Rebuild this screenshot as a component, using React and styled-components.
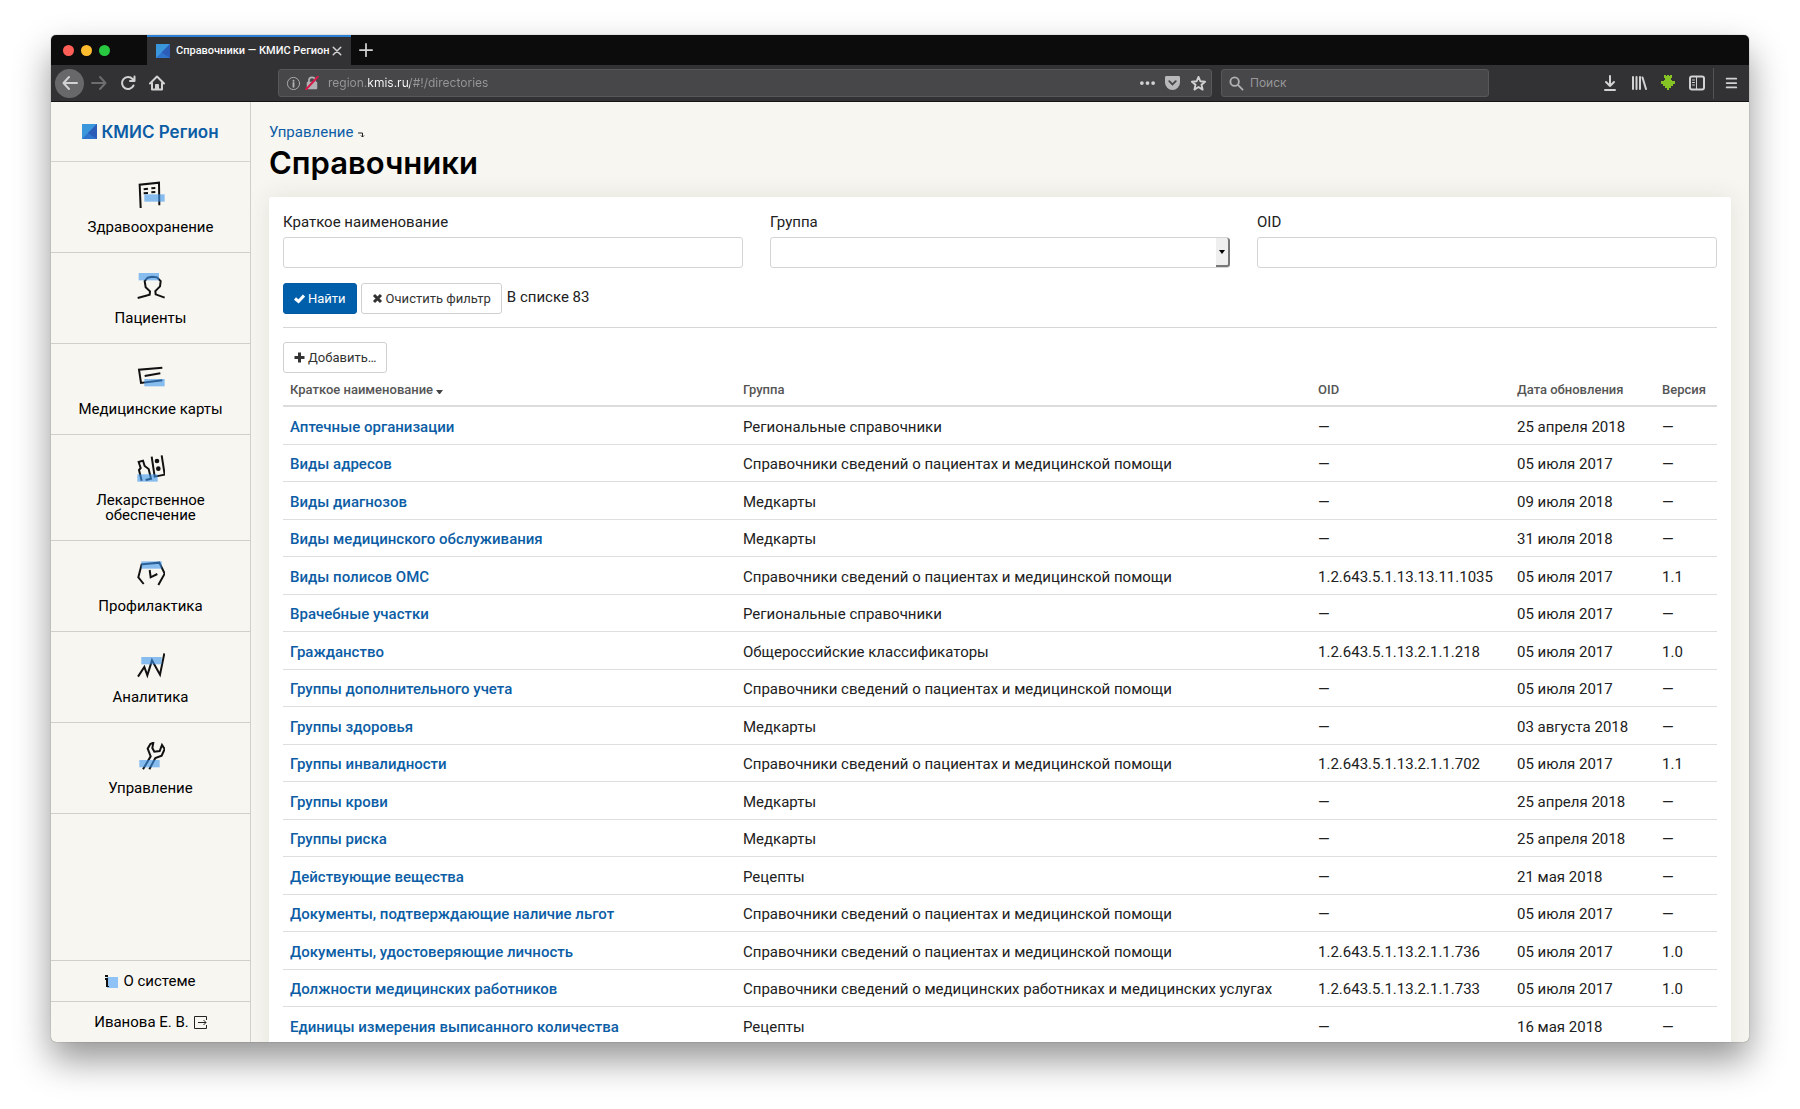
import React from "react";
import styled, { createGlobalStyle, css } from "styled-components";

const GlobalStyle = createGlobalStyle`
  *, *::before, *::after { box-sizing: border-box; }
  body {
    margin: 0;
    background: #fff;
    color: #212121;
    font: 15px/18px Roboto, "Noto Sans", sans-serif;
  }
  button, input, select { font: inherit; margin: 0; }
  a { color: #0c5da5; text-decoration: none; }
  svg { display: block; flex: none; }
`;

const Desktop = styled.div`
  height: 100vh;
  padding: 35px 51px 67px;
  overflow: hidden;
`;

const Window = styled.div`
  height: 100%;
  display: flex;
  flex-direction: column;
  border-radius: 5px;
  overflow: hidden;
  background: #f7f6f1;
  box-shadow: 0 0 1px rgba(0, 0, 0, 0.6), 0 18px 36px rgba(0, 0, 0, 0.42);
`;

/* Browser chrome */

const TabBar = styled.div`
  display: flex;
  align-items: stretch;
  height: 30px;
  flex: none;
  background: #0c0c0d;
`;

const Lights = styled.div`
  display: flex;
  align-items: center;
  gap: 7px;
  width: 96px;
  padding-left: 12px;
`;

const Light = styled.button`
  width: 11px;
  height: 11px;
  padding: 0;
  border: 0;
  border-radius: 50%;
  background: ${(p) => p.$color};
`;

const Tab = styled.div`
  display: flex;
  align-items: center;
  width: 204px;
  padding: 0 9px;
  border-top: 2px solid #2b80d3;
  background: #323234;
  color: #f9f9fa;
  font: 500 11px/14px Roboto, sans-serif;
  white-space: nowrap;
`;

const TabTitle = styled.span`
  flex: 1;
  margin-left: 6px;
`;

const ChromeButton = styled.button`
  display: flex;
  align-items: center;
  justify-content: center;
  flex: none;
  width: ${(p) => p.$width || 29}px;
  height: 29px;
  padding: 0;
  border: 0;
  border-radius: 50%;
  background: ${(p) => (p.$filled ? "#68686a" : "none")};
  color: ${(p) => (p.$dim ? "#6d6d6f" : "#d2d2d3")};
`;

const TabClose = styled(ChromeButton)`
  height: 14px;
`;

const Toolbar = styled.div`
  display: flex;
  align-items: center;
  height: 37px;
  flex: none;
  padding: 0 4px;
  border-bottom: 1px solid #141415;
  background: #323234;
`;

const Spacer = styled.div`
  width: ${(p) => p.$width}px;
  flex: none;
`;

const Field = styled.div`
  display: flex;
  align-items: center;
  height: 28px;
  padding: 0 ${(p) => (p.$wide ? 0 : 6)}px 0 7px;
  border: 1px solid #58585a;
  border-radius: 3px;
  background: #474749;
  color: #b1b1b3;
  ${(p) =>
    p.$wide
      ? css`
          flex: 1;
        `
      : css`
          width: 268px;
          margin-left: 9px;
          flex: none;
        `}
`;

const FieldInput = styled.input`
  flex: 1;
  min-width: 0;
  border: 0;
  padding: 0;
  outline: 0;
  margin-left: ${(p) => p.$gap}px;
  background: none;
  color: #98989a;
  font: 12px/18px Inter, sans-serif;
  &::placeholder { color: #98989a; opacity: 1; }
`;

const AddressInput = styled(FieldInput)`
  background: linear-gradient(90deg, #98989a 40px, #f9f9fa 40px 82px, #98989a 82px);
  background-clip: text;
  -webkit-background-clip: text;
  -webkit-text-fill-color: transparent;
`;

const Divider = styled.div`
  width: 1px;
  height: 31px;
  margin: 0 2px;
  background: #535355;
`;

/* Page */

const Page = styled.div`
  flex: 1;
  min-height: 0;
  display: flex;
`;

const Sidebar = styled.nav`
  display: flex;
  flex-direction: column;
  flex: none;
  width: 200px;
  border-right: 1px solid #cfcfcc;
`;

const Brand = styled.a`
  display: flex;
  align-items: center;
  justify-content: center;
  gap: 4px;
  height: 60px;
  border-bottom: 1px solid #d3d3d0;
  font: 600 17px/20px Inter, sans-serif;
`;

const NavItem = styled.a`
  display: flex;
  flex-direction: column;
  align-items: center;
  gap: 11px;
  padding: 19px 20px 17px;
  border-bottom: 1px solid #cfcfcc;
  color: #000;
  line-height: 15px;
  text-align: center;
`;

const NavFooter = styled.div`
  margin-top: auto;
`;

const FooterLink = styled.a`
  display: flex;
  align-items: center;
  justify-content: center;
  gap: 5px;
  height: 41px;
  border-top: 1px solid #cfcfcc;
  color: #000;
`;

const Main = styled.main`
  flex: 1;
  min-width: 0;
  padding: 20px 18px 0 18px;
  overflow: hidden;
`;

const Crumbs = styled.div`
  display: flex;
  align-items: center;
  gap: 5px;
  height: 20px;
`;

const CrumbArrow = styled.svg`
  margin-top: 5px;
`;

const Title = styled.h1`
  margin: 4px 0 17px;
  color: #000;
  font: 600 31px/34px Inter, sans-serif;
`;

const Card = styled.section`
  padding: 14px;
  border-radius: 3px;
  background: #fff;
  box-shadow: 0 0 24px rgba(60, 50, 0, 0.1);
`;

const Filters = styled.div`
  display: grid;
  grid-template-columns: repeat(3, 1fr);
  gap: 27px;
`;

const FilterLabel = styled.label`
  display: block;
  line-height: 22px;
  margin-bottom: 4px;
`;

const control = css`
  display: block;
  width: 100%;
  height: 31px;
  padding: 0 8px;
  border: 1px solid #d4d4d4;
  border-radius: 3px;
  background: #fff;
`;

const TextBox = styled.input`
  ${control}
`;

const SelectWrap = styled.div`
  position: relative;
`;

const Select = styled.select`
  ${control}
  appearance: none;
`;

const SelectArrow = styled.span`
  position: absolute;
  top: 1px;
  right: 0;
  bottom: 1px;
  display: flex;
  align-items: center;
  justify-content: center;
  width: 14px;
  border: solid #777;
  border-width: 0 2px 2px 0;
  border-radius: 0 3px 3px 0;
  background: #efefef;
  pointer-events: none;
`;

const Actions = styled.div`
  display: flex;
  gap: 4px;
  padding: 15px 0 13px;
  border-bottom: 1px solid #d6d6d6;
  margin-bottom: 14px;
`;

const Button = styled.button`
  display: inline-flex;
  align-items: center;
  gap: 3px;
  height: 31px;
  padding: 0 10px;
  border: 1px solid ${(p) => (p.$primary ? "#005ba3" : "#d0d0d0")};
  border-radius: 3px;
  background: ${(p) => (p.$primary ? "#005fab" : "#fff")};
  color: ${(p) => (p.$primary ? "#fff" : "#333")};
  font-size: 13px;
`;

const Count = styled.span`
  margin-left: 1px;
  line-height: 28px;
`;

const Table = styled.table`
  width: 100%;
  table-layout: fixed;
  border-collapse: separate;
  border-spacing: 0;
  white-space: nowrap;
`;

const Column = styled.col`
  width: ${(p) => (p.$width ? `${p.$width}px` : "auto")};
`;

const HeadCell = styled.th`
  height: 34px;
  padding: 1px 7px 0;
  border-bottom: 2px solid #dcdcdc;
  color: #555;
  font-size: 13px;
  font-weight: 500;
  text-align: left;
`;

const SortArrow = styled.svg`
  display: inline-block;
  margin-left: 3px;
`;

const Cell = styled.td`
  padding: 2px 7px 0;
  border-bottom: 1px solid #dedede;
`;

const Row = styled.tr`
  height: 38px;
  &:nth-child(even) { height: 37px; }
`;

const NameLink = styled.a`
  font-weight: 500;
`;

function Logo({ size }) {
  return (
    <svg width={size} height={size} viewBox="0 0 15 15" aria-hidden="true">
      <path d="M0 0h15v15H0z" fill="#3a97dc" />
      <path d="M15 0v15H0z" fill="#2f74cc" />
      <path d="M15 0v15L6 9z" fill="#2b5cb8" />
    </svg>
  );
}

function Stroke({ size = 16, width = 2, children }) {
  return (
    <svg width={size} height={size} viewBox="0 0 16 16" fill="none" stroke="currentColor"
      strokeWidth={width} strokeLinecap="round" strokeLinejoin="round" aria-hidden="true">
      {children}
    </svg>
  );
}

function BoldIcon({ d }) {
  return (
    <svg width="11" height="11" viewBox="0 0 11 11" fill="none" stroke="currentColor" strokeWidth="3" aria-hidden="true">
      <path d={d} />
    </svg>
  );
}

const navItems = [
  { label: "Здравоохранение", rect: [22, 40],
    art: <path d="M11 81L8 11L66 5L67 73M20 25L33 23M43 22L55 21M20 37L33 36M43 34L55 33" /> },
  { label: "Пациенты", rect: [5, 3],
    art: <path d="M2 78L38 68L39 58L26 46L23 27L32 17L45 14L60 16L71 27L69 43L55 57L56 67L83 77" /> },
  { label: "Медицинские карты", rect: [22, 48],
    art: <path d="M76 14L6 20L12 60L76 52M23 39L70 31" /> },
  { label: "Лекарственное обеспечение", rect: [1, 61],
    art: (
      <>
        <path d="M14 80L6 48L11 42L5 24L18 20L23 36L35 45L42 74L26 78M44 8L53 68L83 62L74 4" />
        <circle cx="60" cy="21" r="4" fill="#111" />
        <circle cx="64" cy="44" r="4" fill="#111" />
      </>
    ) },
  { label: "Профилактика", rect: [13, 4],
    art: <path d="M20 72L4 52L14 13L67 8L83 41L64 75M38 30L41 52L61 42" /> },
  { label: "Аналитика", rect: [13, 18],
    art: <path d="M3 77L22 48L31 73L45 28L69 71L82 7" /> },
  { label: "Управление", rect: [7, 54],
    art: <path d="M18 82L41 43L32 20L40 6L49 2L46 18L52 29L68 27L75 9L83 21L74 41L55 48L37 82" /> },
];

function NavIcon({ rect, art }) {
  return (
    <svg width="28" height="28" viewBox="0 0 84 84" aria-hidden="true">
      <g fill="none" stroke="#111" strokeWidth="6">{art}</g>
      <rect x={rect[0]} y={rect[1]} width="61" height="22" fill="#3c96ee" fillOpacity="0.6" />
    </svg>
  );
}

const REG = "Региональные справочники";
const PAT = "Справочники сведений о пациентах и медицинской помощи";
const MED = "Медкарты";

const rows = [
  ["Аптечные организации", REG, "—", "25 апреля 2018", "—"],
  ["Виды адресов", PAT, "—", "05 июля 2017", "—"],
  ["Виды диагнозов", MED, "—", "09 июля 2018", "—"],
  ["Виды медицинского обслуживания", MED, "—", "31 июля 2018", "—"],
  ["Виды полисов ОМС", PAT, "1.2.643.5.1.13.13.11.1035", "05 июля 2017", "1.1"],
  ["Врачебные участки", REG, "—", "05 июля 2017", "—"],
  ["Гражданство", "Общероссийские классификаторы", "1.2.643.5.1.13.2.1.1.218", "05 июля 2017", "1.0"],
  ["Группы дополнительного учета", PAT, "—", "05 июля 2017", "—"],
  ["Группы здоровья", MED, "—", "03 августа 2018", "—"],
  ["Группы инвалидности", PAT, "1.2.643.5.1.13.2.1.1.702", "05 июля 2017", "1.1"],
  ["Группы крови", MED, "—", "25 апреля 2018", "—"],
  ["Группы риска", MED, "—", "25 апреля 2018", "—"],
  ["Действующие вещества", "Рецепты", "—", "21 мая 2018", "—"],
  ["Документы, подтверждающие наличие льгот", PAT, "—", "05 июля 2017", "—"],
  ["Документы, удостоверяющие личность", PAT, "1.2.643.5.1.13.2.1.1.736", "05 июля 2017", "1.0"],
  ["Должности медицинских работников", "Справочники сведений о медицинских работниках и медицинских услугах", "1.2.643.5.1.13.2.1.1.733", "05 июля 2017", "1.0"],
  ["Единицы измерения выписанного количества", "Рецепты", "—", "16 мая 2018", "—"],
];

function BrowserChrome() {
  return (
    <>
      <TabBar>
        <Lights>
          <Light $color="#ff5f57" aria-label="Закрыть окно" />
          <Light $color="#febc2e" aria-label="Свернуть" />
          <Light $color="#28c840" aria-label="Развернуть" />
        </Lights>
        <Tab>
          <Logo size={14} />
          <TabTitle>Справочники — КМИС Регион</TabTitle>
          <TabClose $width={14} aria-label="Закрыть вкладку">
            <Stroke size={12} width={2}><path d="M3 3l10 10M13 3L3 13" /></Stroke>
          </TabClose>
        </Tab>
        <ChromeButton aria-label="Новая вкладка">
          <Stroke size={14} width={2}><path d="M8 1v14M1 8h14" /></Stroke>
        </ChromeButton>
      </TabBar>
      <Toolbar>
        <ChromeButton $filled aria-label="Назад">
          <Stroke><path d="M15 8H1.500M7 2L1.500 8L7 14" /></Stroke>
        </ChromeButton>
        <ChromeButton $dim aria-label="Вперёд">
          <Stroke><path d="M1 8h13.500M9 2l5.500 6L9 14" /></Stroke>
        </ChromeButton>
        <ChromeButton aria-label="Обновить">
          <Stroke><path d="M13.500 10.500A6 6 0 1 1 12.500 4L14 5.500M14.500 1.500v4.500H10" /></Stroke>
        </ChromeButton>
        <ChromeButton aria-label="Домой">
          <Stroke><path d="M1 8.500L8 1.500L15 8.500M3 8v6.500h10V8M7 14v-4h2v4" /></Stroke>
        </ChromeButton>
        <Spacer $width={107} />
        <Field $wide>
          <Stroke size={15} width={1}>
            <circle cx="8" cy="8" r="6.500" />
            <path d="M8 7.500v4M8 5v.2" strokeWidth="2" />
          </Stroke>
          <Spacer $width={4} />
          <Stroke size={14}>
            <path d="M4.500 7V5a3.500 3.500 0 0 1 7 0v2" />
            <path d="M3 7.500h10v6.500H3z" fill="currentColor" />
            <path d="M1.500 15L14.500 1" stroke="#d7194a" strokeWidth="2.500" />
          </Stroke>
          <AddressInput $gap={9} aria-label="Адрес" defaultValue="region.kmis.ru/#!/directories" />
          <ChromeButton $width={25} aria-label="Действия">
            <svg width="15" height="4" viewBox="0 0 16 4" fill="currentColor">
              <circle cx="2" cy="2" r="2" /><circle cx="8" cy="2" r="2" /><circle cx="14" cy="2" r="2" />
            </svg>
          </ChromeButton>
          <ChromeButton $width={25} aria-label="Сохранить в Pocket">
            <svg width="15" height="15" viewBox="0 0 16 16">
              <path d="M1.500 0h13A1.500 1.500 0 0 1 16 1.500V7a8 8 0 0 1-16 0V1.500A1.500 1.500 0 0 1 1.500 0z" fill="#b8b8ba" />
              <path d="M4.500 5.500L8 9l3.500-3.500" fill="none" stroke="#474749" strokeWidth="2" strokeLinecap="round" />
            </svg>
          </ChromeButton>
          <ChromeButton $width={26} aria-label="В закладки">
            <Stroke size={15}>
              <path d="M8 1l2 4.600 5 .5-3.800 3.300 1.200 5.100L8 11.800l-4.400 2.700 1.200-5.100L1 6.100l5-.5z" />
            </Stroke>
          </ChromeButton>
        </Field>
        <Field>
          <Stroke size={15}><circle cx="6" cy="6" r="4.500" /><path d="M9.500 9.500l5 5" /></Stroke>
          <FieldInput $gap={6} placeholder="Поиск" aria-label="Поиск" />
        </Field>
        <Spacer $width={106} />
        <ChromeButton aria-label="Загрузки">
          <Stroke width={2}><path d="M8 1v10M4 7l4 4 4-4M3 15h10" /></Stroke>
        </ChromeButton>
        <ChromeButton aria-label="Библиотека">
          <Stroke width={2}><path d="M2 2v12M5.500 2v12M9 2v12M11.500 2.500L15 14" /></Stroke>
        </ChromeButton>
        <ChromeButton aria-label="Скачать">
          <svg width="14" height="16" viewBox="0 0 14 16">
            <path d="M3 0h2v1h1V0h2v1h1V0h2v3h-1v2h1v1h3v3h-2v2h-2v2H8v2H6v-2H4v-2H2V9H0V6h3V5h1V3H3z" fill="#86c425" />
          </svg>
        </ChromeButton>
        <ChromeButton aria-label="Боковая панель">
          <Stroke>
            <rect x="1" y="1.500" width="14" height="13" rx="2" />
            <path d="M7.500 2v12" strokeWidth="1" />
            <path d="M3.500 5h2M3.500 7.500h2M3.500 10h2" strokeWidth="1" />
          </Stroke>
        </ChromeButton>
        <Divider />
        <ChromeButton aria-label="Меню">
          <Stroke size={14}><path d="M3 3h11M3 8h11M3 13h11" /></Stroke>
        </ChromeButton>
      </Toolbar>
    </>
  );
}

export default function App() {
  return (
    <Desktop>
      <GlobalStyle />
      <Window>
        <BrowserChrome />
        <Page>
          <Sidebar>
            <Brand href="#!/"><Logo size={15} />КМИС Регион</Brand>
            {navItems.map((item) => (
              <NavItem href="#!/" key={item.label}>
                <NavIcon rect={item.rect} art={item.art} />
                {item.label}
              </NavItem>
            ))}
            <NavFooter>
              <FooterLink href="#!/about">
                <svg width="13" height="13" viewBox="0 0 13 13" aria-hidden="true">
                  <path d="M2 2h11v11H2z" fill="#8fc2f5" />
                  <path d="M0 0h3v2H0zM0 3h3v8h1v1H1V5H0z" fill="#111" />
                </svg>
                О системе
              </FooterLink>
              <FooterLink href="#!/logout">
                Иванова Е. В.
                <svg width="13" height="13" viewBox="0 0 13 13" fill="none" stroke="#222" aria-hidden="true">
                  <path d="M12.500 4V.5H.5v12h12V9M4 6.500h8M9.500 4L12 6.500L9.500 9" />
                </svg>
              </FooterLink>
            </NavFooter>
          </Sidebar>
          <Main>
            <Crumbs>
              <a href="#!/management">Управление</a>
              <CrumbArrow width="7" height="6" viewBox="0 0 7 6" fill="none" stroke="#222" aria-hidden="true">
                <path d="M0 1h4.500v4M3 3.500L4.500 5L6 3.500" />
              </CrumbArrow>
            </Crumbs>
            <Title>Справочники</Title>
            <Card>
              <Filters>
                <div>
                  <FilterLabel htmlFor="name">Краткое наименование</FilterLabel>
                  <TextBox id="name" />
                </div>
                <div>
                  <FilterLabel htmlFor="group">Группа</FilterLabel>
                  <SelectWrap>
                    <Select id="group" defaultValue=""><option value="" /></Select>
                    <SelectArrow>
                      <svg width="6" height="4" viewBox="0 0 6 4"><path d="M0 0h6L3 4z" /></svg>
                    </SelectArrow>
                  </SelectWrap>
                </div>
                <div>
                  <FilterLabel htmlFor="oid">OID</FilterLabel>
                  <TextBox id="oid" />
                </div>
              </Filters>
              <Actions>
                <Button $primary><BoldIcon d="M1 5.500L4.500 8.500L10 2.500" />Найти</Button>
                <Button><BoldIcon d="M2 2L9 9M9 2L2 9" />Очистить фильтр</Button>
                <Count>В списке 83</Count>
              </Actions>
              <Button><BoldIcon d="M5.500 0.500v10M0.500 5.500h10" />Добавить…</Button>
              <Table>
                <colgroup>
                  <Column />
                  <Column $width={575} />
                  <Column $width={199} />
                  <Column $width={145} />
                  <Column $width={62} />
                </colgroup>
                <thead>
                  <tr>
                    <HeadCell>
                      Краткое наименование
                      <SortArrow width="7" height="4" viewBox="0 0 7 4"><path d="M0 0h7L4 4H3z" fill="#444" /></SortArrow>
                    </HeadCell>
                    <HeadCell>Группа</HeadCell>
                    <HeadCell>OID</HeadCell>
                    <HeadCell>Дата обновления</HeadCell>
                    <HeadCell>Версия</HeadCell>
                  </tr>
                </thead>
                <tbody>
                  {rows.map(([name, ...rest]) => (
                    <Row key={name}>
                      <Cell><NameLink href="#!/directories">{name}</NameLink></Cell>
                      {rest.map((text, i) => <Cell key={i}>{text}</Cell>)}
                    </Row>
                  ))}
                </tbody>
              </Table>
            </Card>
          </Main>
        </Page>
      </Window>
    </Desktop>
  );
}
